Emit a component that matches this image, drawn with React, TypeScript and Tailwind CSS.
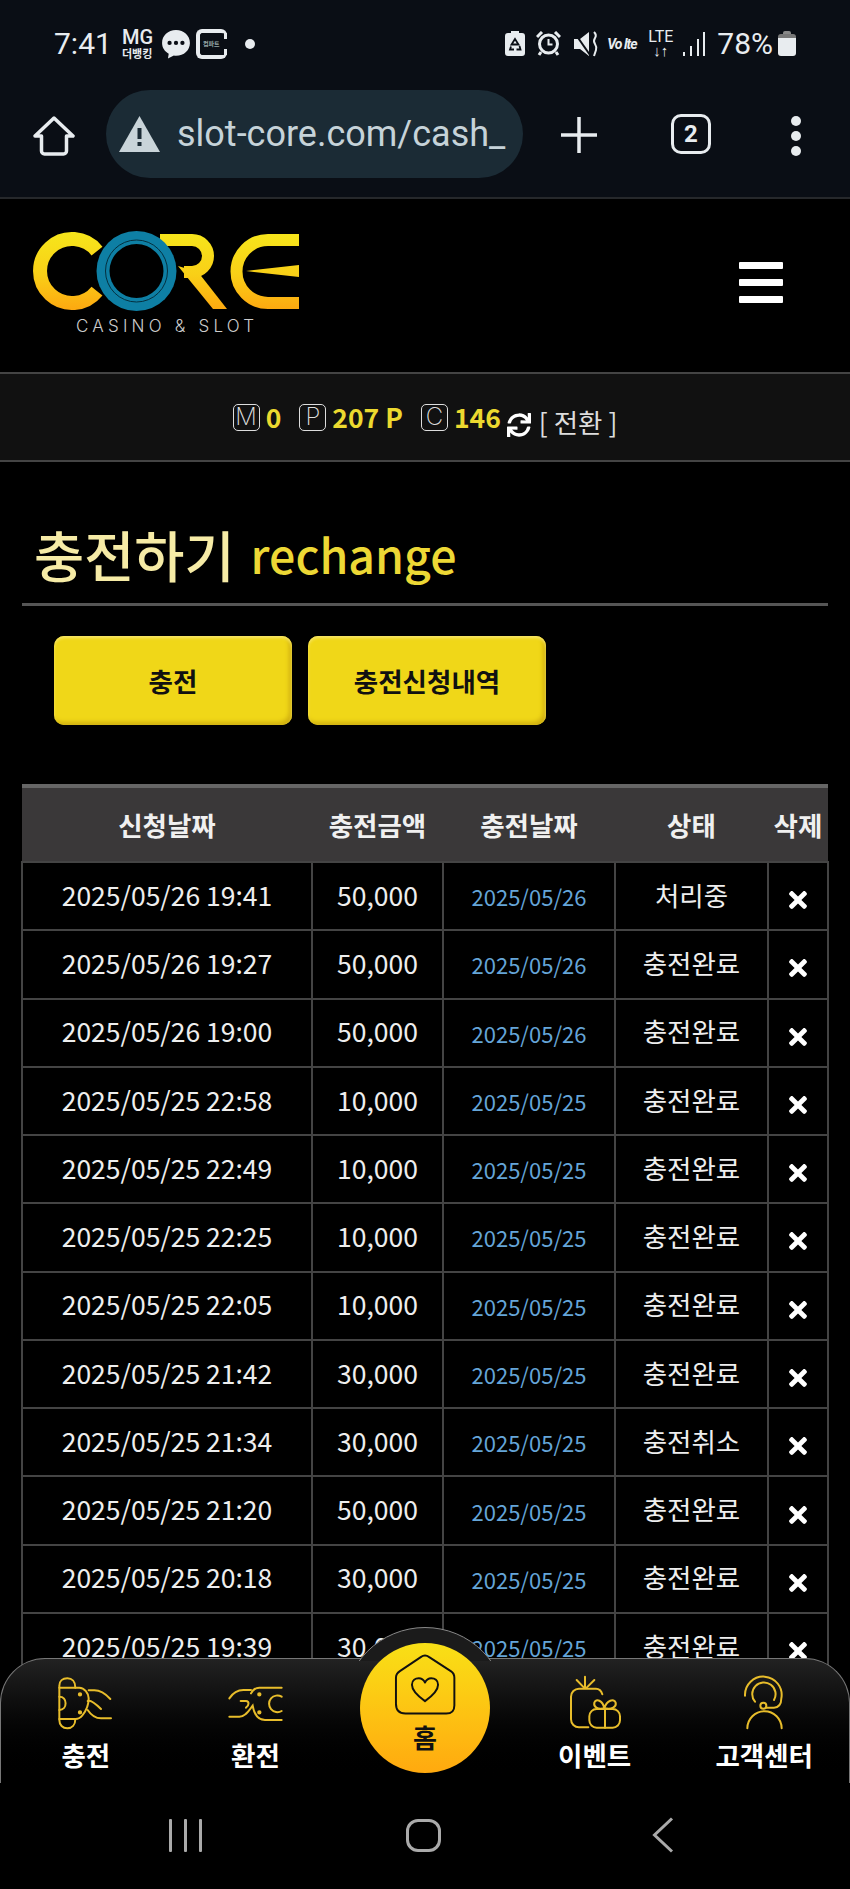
import { FaSync, FaTimes } from 'react-icons/fa';

const rows = [
  ['2025/05/26 19:41', '50,000', '2025/05/26', '처리중'],
  ['2025/05/26 19:27', '50,000', '2025/05/26', '충전완료'],
  ['2025/05/26 19:00', '50,000', '2025/05/26', '충전완료'],
  ['2025/05/25 22:58', '10,000', '2025/05/25', '충전완료'],
  ['2025/05/25 22:49', '10,000', '2025/05/25', '충전완료'],
  ['2025/05/25 22:25', '10,000', '2025/05/25', '충전완료'],
  ['2025/05/25 22:05', '10,000', '2025/05/25', '충전완료'],
  ['2025/05/25 21:42', '30,000', '2025/05/25', '충전완료'],
  ['2025/05/25 21:34', '30,000', '2025/05/25', '충전취소'],
  ['2025/05/25 21:20', '50,000', '2025/05/25', '충전완료'],
  ['2025/05/25 20:18', '30,000', '2025/05/25', '충전완료'],
  ['2025/05/25 19:39', '30,000', '2025/05/25', '충전완료'],
];

function StatusBar() {
  return (
    <div className="flex h-[86px] items-center justify-between pl-[54px] pr-[54px] pt-[1px] text-[#e8ecef] font-['Roboto',sans-serif]">
      <div className="flex items-center">
        <span className="w-[68px] text-[30px] leading-none">7:41</span>
        <div className="flex w-[39px] flex-col items-start leading-none">
          <span className="text-[20px] font-medium leading-[19px]">MG</span>
          <span className="text-[11px] font-bold leading-[12px] font-['Noto_Sans_CJK_KR',sans-serif]">더뱅킹</span>
        </div>
        <svg width="30" height="30" viewBox="0 0 28 28" className="mr-[5px]">
          <path d="M14 1C6.5 1 1 6.3 1 13c0 4.5 2.6 8 6.2 10L6.5 27.5 12 24.8c.7.1 1.3.2 2 .2 7.5 0 13-5.3 13-12S21.5 1 14 1z" fill="#e8ecef" />
          <circle cx="8" cy="13" r="2" fill="#0a0e15" />
          <circle cx="14" cy="13" r="2" fill="#0a0e15" />
          <circle cx="20" cy="13" r="2" fill="#0a0e15" />
        </svg>
        <div className="relative mr-[18px] h-[30px] w-[31px] rounded-[6px] border-[4px] border-r-0 border-[#e8ecef]">
          <div className="absolute right-0 top-0 h-[6px] w-[3px] bg-[#e8ecef]" />
          <div className="absolute right-0 bottom-0 h-[6px] w-[3px] bg-[#e8ecef]" />
          <span className="absolute left-[3px] top-[8px] text-[6px] leading-none font-bold text-[#9aa] font-['Noto_Sans_CJK_KR',sans-serif]">컴파트</span>
        </div>
        <div className="h-[10px] w-[10px] rounded-full bg-[#e8ecef]" />
      </div>
      <div className="flex items-center">
        <svg width="20" height="25" viewBox="0 0 20 25" className="mr-[11px]">
          <path d="M6 0h8v2h3a3 3 0 0 1 3 3v17a3 3 0 0 1-3 3H3a3 3 0 0 1-3-3V5a3 3 0 0 1 3-3h3z" fill="#e8ecef" />
          <path d="M10 8l3.5 5.5h-7zM6 15.5l-1 3h4M14.5 15l1 3.5h-4" fill="none" stroke="#0a0e15" strokeWidth="1.8" />
        </svg>
        <svg width="25" height="25" viewBox="0 0 25 25" className="mr-[12px]">
          <circle cx="12.5" cy="13" r="9" fill="none" stroke="#e8ecef" strokeWidth="3" />
          <path d="M12.5 8v5.5h4" fill="none" stroke="#e8ecef" strokeWidth="2" />
          <path d="M1 6l5-5M24 6l-5-5M5 21l-2 3M20 21l2 3" stroke="#e8ecef" strokeWidth="3" />
        </svg>
        <svg width="26" height="26" viewBox="0 0 26 26" className="mr-[8px]">
          <path d="M1 8h6l9-7v24l-9-7H1z" fill="#e8ecef" />
          <path d="M1 1l16 23" stroke="#0a0e15" strokeWidth="2" />
          <path d="M21 1q3 3 1 6t0 6 1 6-2 6" fill="none" stroke="#e8ecef" strokeWidth="2" />
        </svg>
        <span className="mr-[8px] w-[32px] text-[14px] font-bold italic leading-none tracking-[-1px]">Vo lte</span>
        <div className="mr-[9px] flex w-[27px] flex-col items-center leading-none">
          <span className="text-[16px] leading-[15px]">LTE</span>
          <span className="text-[15px] font-bold leading-[14px]">↓↑</span>
        </div>
        <div className="mr-[12px] flex h-[24px] w-[22px] items-end justify-between">
          <div className="h-[4px] w-[2px] bg-[#e8ecef]" />
          <div className="h-[10px] w-[2px] bg-[#e8ecef]" />
          <div className="h-[17px] w-[2px] bg-[#e8ecef]" />
          <div className="h-[24px] w-[2px] bg-[#e8ecef]" />
        </div>
        <span className="mr-[5px] text-[30px] leading-none">78%</span>
        <div className="flex w-[18px] flex-col items-center">
          <div className="h-[3px] w-[8px] rounded-t-[2px] bg-[#888]" />
          <div className="h-[22px] w-[18px] rounded-[3px] bg-[linear-gradient(#777_18%,#e8ecef_18%)]" />
        </div>
      </div>
    </div>
  );
}

function BrowserBar() {
  return (
    <div className="flex h-[111px] items-start pl-[33px] pr-[48px] pt-[4px]">
      <svg width="42" height="40" viewBox="0 0 42 40" className="mt-[26px] mr-[31px]">
        <path d="M21 2L40 20h-6.5v15a3 3 0 0 1-3 3h-19a3 3 0 0 1-3-3V20H2z" fill="none" stroke="#e8ecef" strokeWidth="3.5" strokeLinejoin="round" />
      </svg>
      <div className="flex h-[88px] w-[417px] items-center overflow-hidden rounded-full bg-[#1b2b35] pl-[13px]">
        <svg width="41" height="36" viewBox="0 0 41 36" className="mr-[17px] shrink-0">
          <path d="M20.5 0L41 36H0z" fill="#c9d4d9" />
          <rect x="18.5" y="12" width="4" height="11" fill="#1b2b35" />
          <rect x="18.5" y="26" width="4" height="4" fill="#1b2b35" />
        </svg>
        <span className="whitespace-nowrap text-[36px] leading-none text-[#c6d3d9] font-['Roboto',sans-serif]">slot-core.com/cash_</span>
      </div>
      <svg width="38" height="38" viewBox="0 0 38 38" className="mt-[26px] ml-[37px] mr-[73px]">
        <path d="M19 1v36M1 19h36" stroke="#e8ecef" strokeWidth="3.5" />
      </svg>
      <div className="mt-[24px] mr-[80px] flex h-[40px] w-[40px] items-center justify-center rounded-[10px] border-[3px] border-[#e8ecef] text-[24px] font-bold leading-none text-[#e8ecef] font-['Roboto',sans-serif]">2</div>
      <div className="mt-[26px] flex flex-col gap-[5px]">
        <div className="h-[10px] w-[10px] rounded-full bg-[#e8ecef]" />
        <div className="h-[10px] w-[10px] rounded-full bg-[#e8ecef]" />
        <div className="h-[10px] w-[10px] rounded-full bg-[#e8ecef]" />
      </div>
    </div>
  );
}

function CoreLogo() {
  return (
    <svg width="270" height="84" viewBox="30 230 270 84" className="block">
      <defs>
        <linearGradient id="coreGold" gradientUnits="userSpaceOnUse" x1="0" y1="232" x2="0" y2="310">
          <stop offset="0" stopColor="#f6e61b" />
          <stop offset="0.55" stopColor="#f9cf17" />
          <stop offset="1" stopColor="#fda810" />
        </linearGradient>
      </defs>
      <path d="M97 251A32 32 0 1 0 97 291" fill="none" stroke="url(#coreGold)" strokeWidth="14" />
      <path d="M160 240H192A16 16 0 0 1 192 272H184" fill="none" stroke="url(#coreGold)" strokeWidth="12" />
      <path d="M178 266L198 272L227 309H213z" fill="url(#coreGold)" />
      <path d="M299 240H268A31.5 31.5 0 0 0 268 303H299" fill="none" stroke="url(#coreGold)" strokeWidth="12" />
      <path d="M246 271L299 265V277z" fill="url(#coreGold)" />
      <circle cx="136.5" cy="271" r="40" fill="#0e7fa4" />
      <circle cx="136.5" cy="271" r="27" fill="#000" />
      <circle cx="136.5" cy="271" r="31" fill="none" stroke="#04303f" strokeWidth="1" />
    </svg>
  );
}

function Balance({ letter, value, className }: { letter: string; value: string; className: string }) {
  return (
    <div className={`flex items-center ${className}`}>
      <div className="mr-[6px] flex h-[27px] w-[27px] items-center justify-center rounded-[5px] border border-[#ddd] text-[24px] font-extralight leading-none text-[#ddd] font-['Inter',sans-serif]">{letter}</div>
      <span className="text-[26.5px] font-bold leading-none text-[#ecd92f]">{value}</span>
    </div>
  );
}

function ChargeIcon() {
  return (
    <svg width="70" height="70" viewBox="5 0 210 210" fill="none" stroke="#e8bd2b" strokeWidth="6" strokeLinecap="round">
      <path d="M30 68V62C30 48 40 40 54 40S78 50 78 68M30 68V165C30 180 40 190 54 190S78 180 78 162" />
      <path d="M30 68H90C105 68 118 85 118 100C118 120 112 135 100 150C95 157 88 162 78 162H30" />
      <path d="M30 95C55 95 55 135 30 135" />
      <path d="M118 76H135C155 76 170 88 183 102" />
      <path d="M115 108C125 102 145 122 155 132" />
      <path d="M115 135C125 150 135 160 155 160H185" />
      <circle cx="92" cy="88" r="3.5" fill="#e8bd2b" />
      <circle cx="92" cy="142" r="3.5" fill="#e8bd2b" />
    </svg>
  );
}

function ExchangeIcon() {
  return (
    <svg width="70" height="70" viewBox="0 0 210 210" fill="none" stroke="#e8bd2b" strokeWidth="6" strokeLinecap="round">
      <path d="M185 68H118C105 68 98 75 93 85" />
      <path d="M28 100C38 85 50 75 70 75H93" />
      <path d="M62 108H78C88 108 88 122 78 128" />
      <path d="M28 155H58C78 155 88 135 98 122C102 145 112 165 135 165H185" />
      <path d="M185 95A25 25 0 1 0 185 138" />
      <circle cx="118" cy="88" r="3.5" fill="#e8bd2b" />
      <circle cx="118" cy="142" r="3.5" fill="#e8bd2b" />
    </svg>
  );
}

function GiftIcon() {
  return (
    <svg width="70" height="70" viewBox="0 0 210 210" fill="none" stroke="#e8bd2b" strokeWidth="6" strokeLinecap="round">
      <path d="M85 187H57A24 24 0 0 1 33 163V95A24 24 0 0 1 57 71H108C118 71 124 78 127 88" />
      <path d="M75 35V68M50 45L72 68M103 45L80 68" />
      <rect x="88" y="132" width="92" height="56" rx="22" />
      <path d="M135 132V188" />
      <path d="M133 130C112 135 100 125 103 113C108 100 128 105 133 130C140 105 162 100 167 113C170 125 155 135 135 130" />
    </svg>
  );
}

function SupportIcon() {
  return (
    <svg width="70" height="70" viewBox="0 0 210 210" fill="none" stroke="#e8bd2b" strokeWidth="6" strokeLinecap="round">
      <path d="M48 92A55 55 0 1 1 157 100C157 118 148 128 135 128H112" />
      <path d="M78 110A35 35 0 1 1 135 105" />
      <circle cx="103" cy="122" r="9" />
      <path d="M55 190A50 50 0 0 1 158 190" />
    </svg>
  );
}

function HomeIcon() {
  return (
    <svg width="62" height="61" viewBox="130 88 190 186" fill="none" stroke="#111" strokeWidth="6" strokeLinejoin="round">
      <path d="M148 140L212 97Q225 88 238 97L304 140Q315 147 315 160V245Q315 270 290 270H165Q136 270 136 240V160Q136 148 148 140Z" />
      <path d="M225 232C205 218 185 200 185 182C185 168 196 162 206 162C214 162 221 167 225 175C229 167 236 162 244 162C255 162 265 168 265 182C265 200 245 218 225 232Z" />
    </svg>
  );
}

function NavItem({ icon, label }: { icon: React.ReactNode; label: string }) {
  return (
    <div className="flex flex-col items-center">
      {icon}
      <span className="mt-[4px] text-[26.5px] font-bold leading-[32px] text-white">{label}</span>
    </div>
  );
}

export default function App() {
  return (
    <div className="relative h-[1889px] w-[850px] overflow-hidden bg-black font-['Noto_Sans_CJK_KR','Noto_Sans',sans-serif]">
      <div className="h-[199px] border-b-2 border-[#26282b] bg-[#0a0e15]">
        <StatusBar />
        <BrowserBar />
      </div>

      {/* Header */}
      <div className="flex h-[173px] items-start justify-between pl-[30px] pr-[67px]">
        <div className="pt-[31px]">
          <CoreLogo />
          <div className="mt-[2px] pl-[46px] text-[17px] font-light leading-[20px] tracking-[4.2px] text-[#ccc] font-['Inter',sans-serif]">CASINO &amp; SLOT</div>
        </div>
        <div className="mt-[63px] flex w-[44px] flex-col gap-[10px]">
          <div className="h-[7px] rounded-[1px] bg-white" />
          <div className="h-[7px] rounded-[1px] bg-white" />
          <div className="h-[7px] rounded-[1px] bg-white" />
        </div>
      </div>

      {/* Balance bar */}
      <div className="flex h-[90px] items-center justify-center border-y-2 border-[#444] bg-[#111]">
        <Balance letter="M" value="0" className="mr-[18px]" />
        <Balance letter="P" value="207 P" className="mr-[18px]" />
        <Balance letter="C" value="146" className="mr-[6px]" />
        <FaSync className="mt-[16px] mr-[8px] text-white" size={24} />
        <span className="mt-[10px] text-[26.5px] leading-none text-[#ddd]">[ 전환 ]</span>
      </div>

      {/* Title */}
      <div className="mx-[22px] flex h-[144px] items-end border-b-[3px] border-[#555] pb-[14px] pl-[12px]">
        <span className="text-[54.5px] font-medium leading-[70px] text-[#f6eba6]">충전하기</span>
        <span className="ml-[16px] text-[46.5px] font-medium leading-[70px] text-[#edd835]">rechange</span>
      </div>

      {/* Buttons */}
      <div className="ml-[54px] mt-[30px] flex gap-[16px]">
        <button className="h-[89px] w-[238px] rounded-[10px] bg-[#f0d718] text-[26.5px] font-bold text-[#111] shadow-[inset_0_2px_3px_#f7e66a,inset_-3px_-3px_4px_#d0b010]">충전</button>
        <button className="h-[89px] w-[238px] rounded-[10px] bg-[#f0d718] text-[26.5px] font-bold text-[#111] shadow-[inset_0_2px_3px_#f7e66a,inset_-3px_-3px_4px_#d0b010]">충전신청내역</button>
      </div>

      {/* History table */}
      <table className="ml-[21px] mt-[59px] w-[806px] table-fixed border-collapse">
        <thead>
          <tr className="h-[76px] border-t-4 border-[#666] bg-[#3a3839] text-[26.5px] font-bold text-[#f0f0f0]">
            <th className="w-[290px] font-bold">신청날짜</th>
            <th className="w-[131px] font-bold">충전금액</th>
            <th className="w-[172px] font-bold">충전날짜</th>
            <th className="w-[153px] font-bold">상태</th>
            <th className="w-[60px] font-bold">삭제</th>
          </tr>
        </thead>
        <tbody>
          {rows.map((row) => (
            <tr key={row[0]} className="h-[68.27px] text-center text-[26.5px] text-[#eee]">
              <td className="border-2 border-[#444] pb-[3px]">{row[0]}</td>
              <td className="border-2 border-[#444] pb-[3px]">{row[1]}</td>
              <td className="border-2 border-[#444] pt-[3px] pb-[2px] text-[22px] text-[#65a5d8]">{row[2]}</td>
              <td className="border-2 border-[#444] pb-[3px]">{row[3]}</td>
              <td className="border-2 border-[#444] pt-[8px] text-white">
                <FaTimes className="mx-auto" size={26} />
              </td>
            </tr>
          ))}
        </tbody>
      </table>

      {/* Bottom nav, floats over the table */}
      <div className="absolute inset-x-0 bottom-[106px] h-[125px] rounded-t-[45px] border border-b-0 border-[#777] bg-gradient-to-b from-[#222] to-black pt-[6px]">
        <div className="absolute -top-[32px] left-1/2 h-[34px] w-[170px] -translate-x-1/2 overflow-hidden">
          <div className="mx-auto h-[164px] w-[164px] rounded-full border border-[#888] bg-[#1b1b1b]" />
        </div>
        <div className="grid grid-cols-5">
          <NavItem icon={<ChargeIcon />} label="충전" />
          <NavItem icon={<ExchangeIcon />} label="환전" />
          <div />
          <NavItem icon={<GiftIcon />} label="이벤트" />
          <NavItem icon={<SupportIcon />} label="고객센터" />
        </div>
        <div className="absolute -top-[16px] left-1/2 flex h-[130px] w-[130px] -translate-x-1/2 flex-col items-center rounded-full bg-gradient-to-b from-[#f8e016] to-[#ffa90f] pt-[11px]">
          <HomeIcon />
          <span className="mt-[7px] text-[26px] font-bold leading-[30px] text-[#111]">홈</span>
        </div>
      </div>

      {/* Android nav */}
      <div className="absolute inset-x-0 bottom-0 flex h-[106px] items-center bg-black pb-[2px]">
        <div className="ml-[169px] flex h-[33px] w-[33px] justify-between">
          <div className="w-[3px] rounded-[1px] bg-[#aaa]" />
          <div className="w-[3px] rounded-[1px] bg-[#aaa]" />
          <div className="w-[3px] rounded-[1px] bg-[#aaa]" />
        </div>
        <div className="ml-[204px] h-[33px] w-[35px] rounded-[12px] border-[3px] border-[#aaa]" />
        <svg width="22" height="36" viewBox="0 0 22 36" className="ml-[211px]" fill="none" stroke="#aaa" strokeWidth="3">
          <path d="M20 1.5L2.5 18L20 34.5" />
        </svg>
      </div>
    </div>
  );
}
